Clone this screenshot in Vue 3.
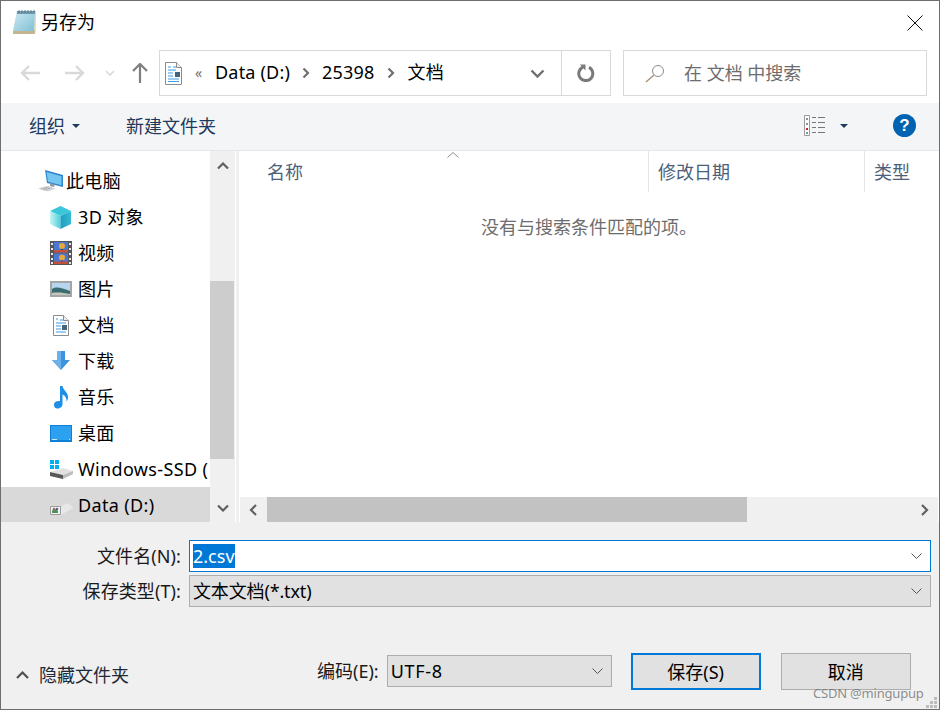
<script setup>
const items = [
  { icon: 'pc', label: '此电脑', top: true },
  { icon: 'cube', label: '3D 对象' },
  { icon: 'video', label: '视频' },
  { icon: 'pic', label: '图片' },
  { icon: 'doc', label: '文档' },
  { icon: 'down', label: '下载' },
  { icon: 'music', label: '音乐' },
  { icon: 'desk', label: '桌面' },
  { icon: 'ssd', label: 'Windows-SSD (' },
  { icon: 'data', label: 'Data (D:)', selected: true }
]
</script>

<template>
  <div class="window">
    <header class="title">
      <svg class="app-icon" width="24" height="26" viewBox="0 0 24 26">
        <defs>
          <linearGradient id="pad" x1="0" y1="0" x2="1" y2="1">
            <stop offset="0" stop-color="#cfeaf2" />
            <stop offset="1" stop-color="#7fc0d6" />
          </linearGradient>
        </defs>
        <path d="M4 2h19v19l-1 4H0z" fill="#e4dcc8" />
        <path d="M4 2h18l-1 20H0z" fill="url(#pad)" />
        <path d="M4 2h18v3H4z" fill="#6f9bb0" />
        <path d="M0 22h21l1-1v3l-1 1H0z" fill="#c4b48f" />
        <path d="M6 1v3M9 1v3M12 1v3M15 1v3M18 1v3M21 1v3" stroke="#5e7a88" />
      </svg>
      <span class="title-text">另存为</span>
      <svg class="close" width="16" height="16" viewBox="0 0 16 16">
        <path d="M.5.5l15 15M15.5.5l-15 15" stroke="#111" fill="none" />
      </svg>
    </header>

    <nav class="nav">
      <div class="nav-buttons">
        <svg width="20" height="16" viewBox="0 0 20 16"><path d="M9 1L2 8l7 7M2 8h18" stroke="#d9d9d9" stroke-width="2.400" fill="none" /></svg>
        <svg class="fwd" width="20" height="16" viewBox="0 0 20 16"><path d="M11 1l7 7-7 7M18 8H0" stroke="#d9d9d9" stroke-width="2.400" fill="none" /></svg>
        <svg class="hist" width="10" height="6" viewBox="0 0 10 6"><path d="M1 1l4 4 4-4" stroke="#d9d9d9" stroke-width="1.600" fill="none" /></svg>
        <svg class="up" width="16" height="20" viewBox="0 0 16 20"><path d="M1 8l7-7 7 7M8 1v19" stroke="#7f7f7f" stroke-width="2.200" fill="none" /></svg>
      </div>
      <div class="address">
        <svg class="addr-icon" width="17" height="23" viewBox="0 0 17 23">
          <path d="M.5.5h11l5 5v17H.5z" fill="#fff" stroke="#8b8b8b" />
          <path d="M11.500.5v5h5" fill="#eee" stroke="#8b8b8b" />
          <path d="M3 5h3M8 5h3M3 8h8M3 11h5M3 14h5M3 17h11M3 19.500h11" stroke="#3c9be8" />
          <path d="M10 10h5v5h-5z" fill="#45647c" />
        </svg>
        <span class="crumb-more">«</span>
        <span class="crumb">Data (D:)</span>
        <svg class="sep" width="8" height="12" viewBox="0 0 8 12"><path d="M1.500 1.500L6 6l-4.500 4.500" stroke="#6f6f6f" stroke-width="2.200" fill="none" /></svg>
        <span class="crumb">25398</span>
        <svg class="sep sep-last" width="8" height="12" viewBox="0 0 8 12"><path d="M1.500 1.500L6 6l-4.500 4.500" stroke="#6f6f6f" stroke-width="2.200" fill="none" /></svg>
        <span class="crumb">文档</span>
        <svg class="addr-drop" width="15" height="9" viewBox="0 0 15 9"><path d="M1.500 1.500l6 6 6-6" stroke="#6f6f6f" stroke-width="2.400" fill="none" /></svg>
        <div class="refresh">
          <svg width="18" height="18" viewBox="0 0 18 18"><path d="M6 3.200a7 7 0 1 0 6 .2" stroke="#7a7a7a" stroke-width="3" fill="none" /><path d="M3 .5h5.500v6z" fill="#7a7a7a" /></svg>
        </div>
      </div>
      <div class="search">
        <svg width="20" height="19" viewBox="0 0 20 19">
          <circle cx="13" cy="7" r="5.500" fill="none" stroke="#8c8c8c" />
          <path d="M9 11l-8 7" stroke="#a58d74" stroke-width="1.300" />
        </svg>
        <span>在 文档 中搜索</span>
      </div>
    </nav>

    <div class="toolbar">
      <span class="tool">组织</span>
      <i class="caret organize-caret"></i>
      <span class="tool new-folder">新建文件夹</span>
      <svg class="view" width="22" height="21" viewBox="0 0 22 21">
        <path d="M.5.5h5v20h-5z" fill="#fff" stroke="#9a9a9a" />
        <path d="M2 3h2v2H2zM2 8h2v2H2zM2 13h2v2H2zM2 17h2v2H2z" fill="#7f9a8c" />
        <path d="M2 13h2v2H2z" fill="#c8261c" />
        <path d="M8 2.500h4M14 2.500h7M8 7.500h4M14 7.500h7M8 12.500h4M14 12.500h7M8 17.500h4M14 17.500h7" stroke="#777" />
      </svg>
      <i class="caret view-caret"></i>
      <span class="help">?</span>
    </div>

    <main class="main">
      <aside class="tree">
        <ul class="tree-list">
          <li v-for="item in items" :key="item.label" class="row" :class="{ selected: item.selected, top: item.top }">
            <svg v-if="item.icon === 'pc'" class="ic" width="26" height="22" viewBox="0 0 26 22">
              <path d="M7 0l18 5v12L9 13z" fill="#2b86cc" />
              <path d="M8.500 2l15 4.200v9L10 11.800z" fill="#74c6f0" />
              <path d="M12 13l5 1.500-1 2.500-4-1z" fill="#8f9aa3" />
              <path d="M0 18.500l9-2.500 9 2.500-8 3z" fill="#d4d7da" />
              <path d="M3 18l6 2M6 17.200l6 2M2.500 19.300l9-2.700M5 20.300l9-2.700" stroke="#b0b4b8" stroke-width=".8" />
            </svg>
            <svg v-else-if="item.icon === 'cube'" class="ic cube" width="23" height="23" viewBox="0 0 23 23">
              <defs>
                <linearGradient id="cubeL" x1="0" y1="0" x2="1" y2="0">
                  <stop offset="0" stop-color="#c8f4f3" />
                  <stop offset="1" stop-color="#4fcfdc" />
                </linearGradient>
                <linearGradient id="cubeR" x1="0" y1="0" x2="1" y2="0">
                  <stop offset="0" stop-color="#1e9dc2" />
                  <stop offset="1" stop-color="#38b9d2" />
                </linearGradient>
              </defs>
              <path d="M11.500 0L22 5l-10.500 5L1 5z" fill="#3cc6da" />
              <path d="M1 5l10.500 5v13L1 18z" fill="url(#cubeL)" />
              <path d="M11.500 10L22 5v13l-10.500 5z" fill="url(#cubeR)" />
            </svg>
            <svg v-else-if="item.icon === 'video'" class="ic" width="22" height="24" viewBox="0 0 22 24">
              <path d="M0 0h22v24H0z" fill="#55555c" />
              <path d="M4 1h14v10.500H4zM4 12.500h14V23H4z" fill="#4a78d0" />
              <path d="M4 9h14v2.500H4zM4 20.500h14V23H4z" fill="#c4503a" />
              <circle cx="12" cy="5" r="3" fill="#e4a83c" />
              <circle cx="12" cy="16.500" r="3" fill="#e4a83c" />
              <path d="M11 8h2v1h-2zM11 19.500h2v1h-2z" fill="#2b3a58" />
              <path d="M1 2h2v2H1zM1 7h2v2H1zM1 12h2v2H1zM1 17h2v2H1zM1 21h2v2H1zM19 2h2v2h-2zM19 7h2v2h-2zM19 12h2v2h-2zM19 17h2v2h-2zM19 21h2v2h-2z" fill="#e8e8e8" />
            </svg>
            <svg v-else-if="item.icon === 'pic'" class="ic" width="22" height="16" viewBox="0 0 22 16">
              <path d="M1 1h20v14H1z" fill="#fff" stroke="#a5a5a5" stroke-width="2" />
              <path d="M2 2h18v12H2z" fill="#b5d6ee" />
              <path d="M2 8c5-3 9-1 18 2v4H2z" fill="#3b6b70" />
              <path d="M2 12c6-1 12 0 18 1v1H2z" fill="#c4c8ba" />
            </svg>
            <svg v-else-if="item.icon === 'doc'" class="ic" width="22" height="21" viewBox="0 0 22 21">
              <path d="M3.500.5h10l5 5v15h-15z" fill="#fff" stroke="#8b8b8b" />
              <path d="M13.500.5v5h5" fill="#eee" stroke="#8b8b8b" />
              <path d="M6 4h2M10 5h3M6 8h10M6 11h5M6 14h5M6 17h10" stroke="#3c9be8" />
              <path d="M12 10h5v5h-5z" fill="#45647c" />
            </svg>
            <svg v-else-if="item.icon === 'down'" class="ic" width="22" height="20" viewBox="0 0 22 20">
              <path d="M7 0h8v9h5l-9 10L2 9h5z" fill="#3f93dc" />
              <path d="M7 0h4v19L2 9h5z" fill="#6db1ea" />
            </svg>
            <svg v-else-if="item.icon === 'music'" class="ic" width="22" height="23" viewBox="0 0 22 23">
              <path d="M10 0h2.500c.5 4 5.500 6 5.500 11 0 2-.5 3-1.500 4.500.5-3-1.500-6-4-7V18c0 3-2.500 4.500-5 4.500S4 21 4 18.500 6.500 14.500 10 15z" fill="#1e8fe6" />
            </svg>
            <svg v-else-if="item.icon === 'desk'" class="ic" width="22" height="17" viewBox="0 0 22 17">
              <path d="M0 0h22v17H0z" fill="#0f7fd8" />
              <path d="M1 1h20v14H1z" fill="#2ba1f0" />
              <path d="M2 14.500h5M19 14.500h1" stroke="#cfe8fb" />
            </svg>
            <svg v-else-if="item.icon === 'ssd'" class="ic" width="23" height="20" viewBox="0 0 23 20">
              <path d="M0 13l13-4 10 3-10 4z" fill="#e2e2e2" />
              <path d="M13 16l10-4v3l-10 5z" fill="#bdbdbd" />
              <path d="M0 13l13 3v4L0 17z" fill="#585858" />
              <path d="M0 1h4v4H0zM5 1h4v4H5zM0 6h4v4H0zM5 6h4v4H5z" fill="#00adef" />
            </svg>
            <svg v-else-if="item.icon === 'data'" class="ic" width="24" height="20" viewBox="0 0 24 20">
              <path d="M11 12l6-4 6 4v1l-12 7z" fill="#e8e8e8" />
              <path d="M.5 11.500h10v8H.5z" fill="#f4f4f4" stroke="#9a9a9a" />
              <path d="M2 16c1-2 2-2 3-2s2 1 3 2v2H2z" fill="#4e8f5a" />
              <circle cx="4" cy="14" r="1.300" fill="#b06a48" />
              <circle cx="7" cy="14" r="1.300" fill="#3f6aa6" />
            </svg>
            <span class="row-label">{{ item.label }}</span>
          </li>
        </ul>
      </aside>
      <div class="tree-scroll">
        <svg width="12" height="8" viewBox="0 0 12 8"><path d="M1 6.500l5-5 5 5" stroke="#606060" stroke-width="2.200" fill="none" /></svg>
        <div class="tree-track"><div class="tree-thumb"></div></div>
        <svg width="12" height="8" viewBox="0 0 12 8"><path d="M1 1.500l5 5 5-5" stroke="#606060" stroke-width="2.200" fill="none" /></svg>
      </div>
      <div class="splitter"></div>
      <section class="list">
        <div class="list-head">
          <div class="col col-name">
            <svg class="sort" width="12" height="6" viewBox="0 0 12 6"><path d="M.5 5.500l5.500-5 5.500 5" stroke="#8d8d8d" fill="none" /></svg>
            名称
          </div>
          <div class="col col-date">修改日期</div>
          <div class="col col-type">类型</div>
        </div>
        <p class="empty">没有与搜索条件匹配的项。</p>
        <div class="hscroll">
          <svg width="10" height="12" viewBox="0 0 10 12"><path d="M8 1L3 6l5 5" stroke="#606060" stroke-width="2.200" fill="none" /></svg>
          <div class="h-track"><div class="h-thumb"></div></div>
          <svg width="10" height="12" viewBox="0 0 10 12"><path d="M2 1l5 5-5 5" stroke="#606060" stroke-width="2.200" fill="none" /></svg>
        </div>
      </section>
    </main>

    <form class="form" @submit.prevent>
      <div class="field">
        <label class="field-label">文件名(N):</label>
        <div class="input">
          <span class="selected-text">2.csv</span>
          <svg class="mini" width="11" height="6" viewBox="0 0 11 6"><path d="M.5.500l5 5 5-5" stroke="#555" fill="none" /></svg>
        </div>
      </div>
      <div class="field type-field">
        <label class="field-label">保存类型(T):</label>
        <div class="select">
          <span class="select-text">文本文档(*.txt)</span>
          <svg class="mini" width="11" height="6" viewBox="0 0 11 6"><path d="M.5.500l5 5 5-5" stroke="#555" fill="none" /></svg>
        </div>
      </div>
      <div class="actions">
        <svg class="hide-ic" width="13" height="8" viewBox="0 0 13 8"><path d="M1 7l5.500-5.500L12 7" stroke="#505050" stroke-width="2.200" fill="none" /></svg>
        <span class="hide">隐藏文件夹</span>
        <label class="enc-label">编码(E):</label>
        <div class="enc">
          <span class="enc-text">UTF-8</span>
          <svg class="mini" width="11" height="6" viewBox="0 0 11 6"><path d="M.5.500l5 5 5-5" stroke="#555" fill="none" /></svg>
        </div>
        <button class="btn primary" type="button">保存(S)</button>
        <button class="btn" type="button">取消</button>
      </div>
    </form>

    <span class="watermark">CSDN @mingupup</span>
    <svg class="grip" width="11" height="11" viewBox="0 0 11 11">
      <path d="M8 0h3v3H8zM4 4h3v3H4zM8 4h3v3H8zM0 8h3v3H0zM4 8h3v3H4zM8 8h3v3H8z" fill="#bdbdbd" />
    </svg>
  </div>
</template>

<style>
html, body { margin: 0; padding: 0; }
</style>

<style scoped>
.window {
  width: 940px;
  height: 710px;
  box-sizing: border-box;
  border: 1px solid #6e6e6e;
  background: #f0f0f0;
  display: flex;
  flex-direction: column;
  position: relative;
  overflow: hidden;
  font: 18px/24px "Noto Sans", "Noto Sans CJK SC", sans-serif;
  color: #000;
}
.title {
  height: 49px;
  flex: none;
  background: #fff;
  display: flex;
  align-items: flex-start;
  padding: 8px 16px 0 12px;
  box-sizing: border-box;
}
.title-text { margin: 0 0 0 4px; line-height: 26px; }
.close { margin: 6px 0 0 auto; }
.nav {
  height: 53px;
  flex: none;
  background: #fff;
  display: flex;
  align-items: flex-start;
  box-sizing: border-box;
}
.nav-buttons {
  width: 158px;
  height: 46px;
  display: flex;
  align-items: center;
  flex: none;
}
.nav-buttons svg:first-child { margin-left: 19px; }
.fwd { margin-left: 25px; }
.hist { margin-left: 20px; }
.up { margin-left: 17px; }
.address {
  width: 452px;
  height: 46px;
  box-sizing: border-box;
  border: 1px solid #d9d9d9;
  display: flex;
  align-items: center;
  flex: none;
}
.addr-icon { margin-left: 5px; }
.crumb-more { margin-left: 13px; width: 20px; color: #6f6f6f; font-size: 14px; }
.crumb { white-space: nowrap; letter-spacing: .2px; padding-bottom: 2px; }
.sep { margin: 0 12px; }
.sep-last { margin-right: 13px; }
.addr-drop { margin-left: auto; }
.refresh {
  width: 48px;
  height: 100%;
  margin-left: 16px;
  border-left: 1px solid #d9d9d9;
  display: flex;
  align-items: center;
  justify-content: center;
  flex: none;
}
.search {
  width: 304px;
  height: 46px;
  margin-left: 12px;
  box-sizing: border-box;
  border: 1px solid #d9d9d9;
  display: flex;
  align-items: center;
  padding-left: 21px;
  color: #6d6d6d;
  flex: none;
}
.search span { margin-left: 19px; white-space: nowrap; }
.toolbar {
  height: 48px;
  flex: none;
  box-sizing: border-box;
  background: #f4f5f7;
  border-bottom: 1px solid #e6e6e6;
  display: flex;
  align-items: center;
  padding: 0 0 2px 28px;
}
.tool { color: #1e395b; white-space: nowrap; }
.caret {
  width: 0;
  height: 0;
  border-left: 4px solid transparent;
  border-right: 4px solid transparent;
  border-top: 4px solid #1e395b;
}
.organize-caret { margin-left: 7px; }
.new-folder { margin-left: 46px; }
.view { margin-left: auto; }
.view-caret { margin-left: 14px; }
.help {
  width: 23px;
  height: 23px;
  margin: 0 23px 0 45px;
  border-radius: 50%;
  background: #0063b1;
  color: #fff;
  font: bold 17px/23px "Liberation Sans", sans-serif;
  text-align: center;
}
.main {
  height: 371px;
  flex: none;
  display: flex;
  background: #fff;
  overflow: hidden;
}
.tree { width: 209px; flex: none; overflow: hidden; }
.tree-list { list-style: none; margin: 0; padding: 12px 0 0; }
.row {
  height: 36px;
  display: flex;
  align-items: center;
  position: relative;
  padding-left: 49px;
  white-space: nowrap;
  box-sizing: border-box;
}
.row.top { padding-left: 37px; }
.row.selected { background: #d9d9d9; }
.ic { flex: none; }
.cube { margin-left: -1px; }
.row-label {
  position: absolute;
  left: 77px;
  top: 6px;
  letter-spacing: .35px;
}
.row.top .row-label { left: 65px; }
.tree-scroll {
  width: 25px;
  flex: none;
  background: #f0f0f0;
  display: flex;
  flex-direction: column;
  align-items: center;
  padding: 11px 0 10px;
  box-sizing: border-box;
}
.tree-track { flex: 1; width: 100%; margin: 11px 0; }
.tree-thumb { width: 24px; height: 178px; margin-top: 100px; background: #cdcdcd; }
.splitter {
  width: 3px;
  margin-left: 1px;
  background: #f0f0f0;
  flex: none;
}
.list { flex: 1; min-width: 0; position: relative; display: flex; flex-direction: column; }
.list-head { height: 41px; display: flex; flex: none; color: #4c607a; }
.col { height: 100%; box-sizing: border-box; padding-top: 9px; white-space: nowrap; position: relative; }
.col-name { width: 410px; padding-left: 28px; border-right: 1px solid #e5e5e5; }
.col-date { width: 216px; padding-left: 9px; border-right: 1px solid #e5e5e5; }
.col-type { flex: 1; padding-left: 9px; overflow: hidden; }
.sort { position: absolute; left: 208px; top: 1px; }
.empty {
  margin: 23px 0 0 242px;
  color: #6d6d6d;
  white-space: nowrap;
}
.hscroll {
  height: 25px;
  margin: auto 0 0 1px;
  width: 698px;
  background: #f0f0f0;
  display: flex;
  align-items: center;
  flex: none;
}
.hscroll svg:first-child { margin-left: 8px; }
.hscroll svg:last-child { margin-right: 8px; margin-left: 4px; }
.h-track { flex: 1; height: 100%; margin-left: 9px; margin-right: 4px; }
.h-thumb { width: 480px; height: 100%; background: #c2c2c2; }
.form { flex: 1; display: flex; flex-direction: column; min-height: 0; }
.field { display: flex; align-items: center; height: 32px; margin-top: 18px; }
.type-field { margin-top: 3px; }
.field-label { width: 180px; flex: none; text-align: right; white-space: nowrap; color: #1a1a1a; letter-spacing: .1px; }
.input, .select {
  width: 742px;
  height: 32px;
  margin-left: 8px;
  box-sizing: border-box;
  display: flex;
  align-items: center;
  padding-left: 3px;
  flex: none;
}
.input { background: #fff; border: 1px solid #0078d7; }
.select { background: #e1e1e1; border: 1px solid #adadad; }
.select-text { letter-spacing: -.15px; }
.selected-text { background: #0078d7; color: #fff; line-height: 24px; }
.mini { margin-left: auto; margin-right: 8px; flex: none; }
.actions { display: flex; align-items: flex-start; margin-top: 46px; position: relative; }
.hide-ic { margin: 18px 0 0 15px; flex: none; }
.hide { margin: 10px 0 0 10px; color: #1f2a38; white-space: nowrap; }
.enc-label { margin: 6px 0 0 188px; white-space: nowrap; color: #1a1a1a; }
.enc {
  width: 225px;
  height: 32px;
  margin: 2px 0 0 8px;
  box-sizing: border-box;
  background: #e1e1e1;
  border: 1px solid #adadad;
  display: flex;
  align-items: center;
  padding-left: 3px;
  flex: none;
}
.enc-text { letter-spacing: .7px; }
.btn {
  width: 130px;
  height: 37px;
  margin-left: 20px;
  box-sizing: border-box;
  background: #e1e1e1;
  border: 1px solid #adadad;
  font: inherit;
  color: #000;
  padding: 0;
  flex: none;
}
.enc + .btn { margin-left: 19px; }
.btn.primary { border: 2px solid #0078d7; }
.watermark {
  position: absolute;
  left: 812px;
  bottom: 7px;
  font-size: 13px;
  line-height: 18px;
  color: rgba(105, 105, 105, 0.75);
  white-space: nowrap;
  letter-spacing: -.2px;
}
.grip { position: absolute; right: 2px; bottom: 1px; }
</style>
